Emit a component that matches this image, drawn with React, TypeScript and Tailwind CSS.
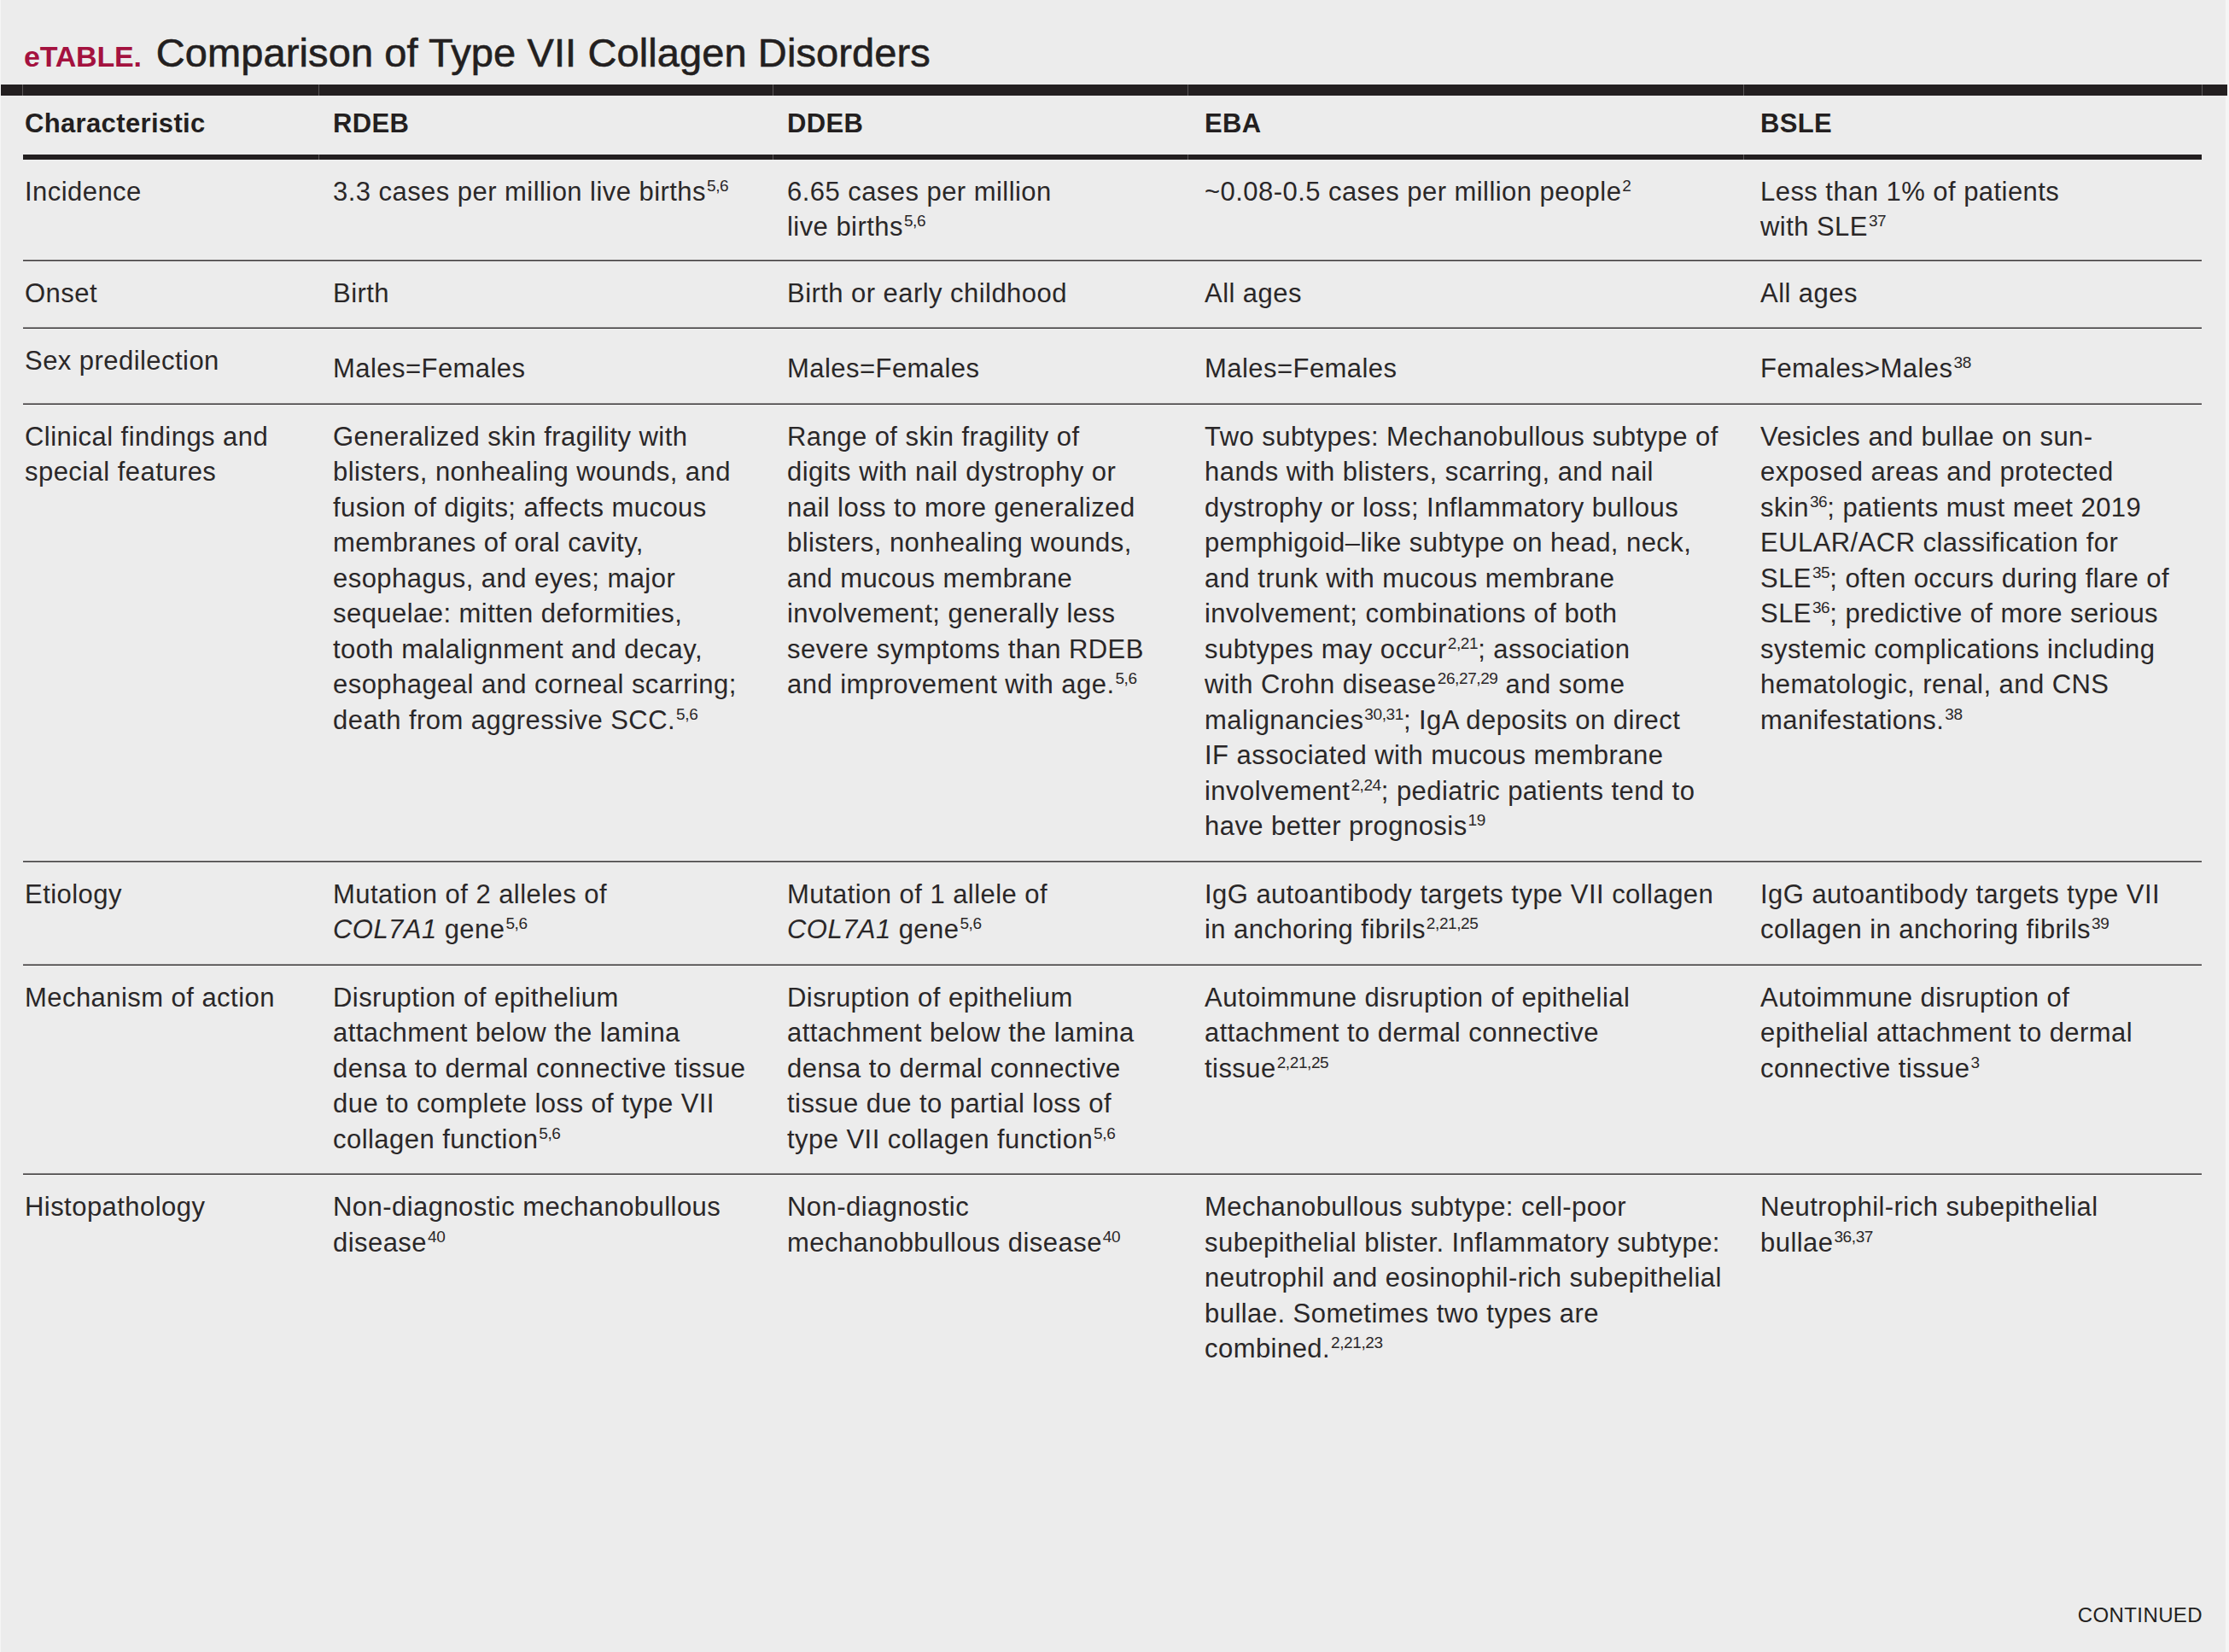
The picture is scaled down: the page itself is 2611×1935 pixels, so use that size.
import React from "react";

const Sup = ({ c }: { c: string }) => (
  <sup className="text-[19px] -top-[11px] tracking-[-0.4px] ml-[1px]">{c}</sup>
);

type Line = React.ReactNode;
type Row = {
  label: Line[];
  cells: Line[][];
  pt?: string;
  pb?: string;
  cellPt?: string;
};

const rows: Row[] = [
  {
    label: ["Incidence"],
    pb: "pb-[17px]",
    cells: [
      [<>3.3 cases per million live births<Sup c="5,6" /></>],
      ["6.65 cases per million", <>live births<Sup c="5,6" /></>],
      [<>~0.08-0.5 cases per million people<Sup c="2" /></>],
      ["Less than 1% of patients", <>with SLE<Sup c="37" /></>],
    ],
  },
  {
    label: ["Onset"],
    cells: [["Birth"], ["Birth or early childhood"], ["All ages"], ["All ages"]],
  },
  {
    label: ["Sex predilection"],
    cellPt: "pt-[26px]",
    cells: [
      ["Males=Females"],
      ["Males=Females"],
      ["Males=Females"],
      [<>Females&gt;Males<Sup c="38" /></>],
    ],
  },
  {
    label: ["Clinical findings and", "special features"],
    cells: [
      [
        "Generalized skin fragility with",
        "blisters, nonhealing wounds, and",
        "fusion of digits; affects mucous",
        "membranes of oral cavity,",
        "esophagus, and eyes; major",
        "sequelae: mitten deformities,",
        "tooth malalignment and decay,",
        "esophageal and corneal scarring;",
        <>death from aggressive SCC.<Sup c="5,6" /></>,
      ],
      [
        "Range of skin fragility of",
        "digits with nail dystrophy or",
        "nail loss to more generalized",
        "blisters, nonhealing wounds,",
        "and mucous membrane",
        "involvement; generally less",
        "severe symptoms than RDEB",
        <>and improvement with age.<Sup c="5,6" /></>,
      ],
      [
        "Two subtypes: Mechanobullous subtype of",
        "hands with blisters, scarring, and nail",
        "dystrophy or loss; Inflammatory bullous",
        "pemphigoid\u2013like subtype on head, neck,",
        "and trunk with mucous membrane",
        "involvement; combinations of both",
        <>subtypes may occur<Sup c="2,21" />; association</>,
        <>with Crohn disease<Sup c="26,27,29" /> and some</>,
        <>malignancies<Sup c="30,31" />; IgA deposits on direct</>,
        "IF associated with mucous membrane",
        <>involvement<Sup c="2,24" />; pediatric patients tend to</>,
        <>have better prognosis<Sup c="19" /></>,
      ],
      [
        "Vesicles and bullae on sun-",
        "exposed areas and protected",
        <>skin<Sup c="36" />; patients must meet 2019</>,
        "EULAR/ACR classification for",
        <>SLE<Sup c="35" />; often occurs during flare of</>,
        <>SLE<Sup c="36" />; predictive of more serious</>,
        "systemic complications including",
        "hematologic, renal, and CNS",
        <>manifestations.<Sup c="38" /></>,
      ],
    ],
  },
  {
    label: ["Etiology"],
    cells: [
      ["Mutation of 2 alleles of", <><i>COL7A1</i> gene<Sup c="5,6" /></>],
      ["Mutation of 1 allele of", <><i>COL7A1</i> gene<Sup c="5,6" /></>],
      [
        "IgG autoantibody targets type VII collagen",
        <>in anchoring fibrils<Sup c="2,21,25" /></>,
      ],
      [
        "IgG autoantibody targets type VII",
        <>collagen in anchoring fibrils<Sup c="39" /></>,
      ],
    ],
  },
  {
    label: ["Mechanism of action"],
    cells: [
      [
        "Disruption of epithelium",
        "attachment below the lamina",
        "densa to dermal connective tissue",
        "due to complete loss of type VII",
        <>collagen function<Sup c="5,6" /></>,
      ],
      [
        "Disruption of epithelium",
        "attachment below the lamina",
        "densa to dermal connective",
        "tissue due to partial loss of",
        <>type VII collagen function<Sup c="5,6" /></>,
      ],
      [
        "Autoimmune disruption of epithelial",
        "attachment to dermal connective",
        <>tissue<Sup c="2,21,25" /></>,
      ],
      [
        "Autoimmune disruption of",
        "epithelial attachment to dermal",
        <>connective tissue<Sup c="3" /></>,
      ],
    ],
  },
  {
    label: ["Histopathology"],
    cells: [
      ["Non-diagnostic mechanobullous", <>disease<Sup c="40" /></>],
      ["Non-diagnostic", <>mechanobbullous disease<Sup c="40" /></>],
      [
        "Mechanobullous subtype: cell-poor",
        "subepithelial blister. Inflammatory subtype:",
        "neutrophil and eosinophil-rich subepithelial",
        "bullae. Sometimes two types are",
        <>combined.<Sup c="2,21,23" /></>,
      ],
      ["Neutrophil-rich subepithelial", <>bullae<Sup c="36,37" /></>],
    ],
  },
];

const colPad = ["pl-[2px]", "pl-[17px]", "pl-[17px]", "pl-[20px]", "pl-[20px]"];
const gridCols = "grid grid-cols-[346px_532px_486px_651px_537px]";

function Lines({ lines }: { lines: Line[] }) {
  return (
    <>
      {lines.map((l, i) => (
        <div key={i} className="whitespace-nowrap">
          {l}
        </div>
      ))}
    </>
  );
}

function TableBar({ h }: { h: string }) {
  return (
    <div className={`flex ${h}`}>
      <div className="w-[346px] bg-[#231f20]" />
      <div className="w-px bg-[#5a5758]" />
      <div className="w-[531px] bg-[#231f20]" />
      <div className="w-px bg-[#5a5758]" />
      <div className="w-[485px] bg-[#231f20]" />
      <div className="w-px bg-[#5a5758]" />
      <div className="w-[650px] bg-[#231f20]" />
      <div className="w-px bg-[#5a5758]" />
      <div className="flex-1 bg-[#231f20]" />
    </div>
  );
}

export default function App() {
  return (
    <div className="w-[2611px] h-[1935px] bg-[#ececec] border-l border-r-[4px] border-[#f5f5f5] flex flex-col font-['Liberation_Sans',Arial,sans-serif] text-[#231f20]">
      <div className="pl-[27px] pt-[38px] pb-[9px] flex items-baseline leading-[47px]">
        <span className="text-[34px] font-bold text-[#a4123f] tracking-[-0.2px]">eTABLE.</span>
        <span className="ml-[17px] text-[47px] tracking-[0.1px] [-webkit-text-stroke:0.6px_#231f20]">
          Comparison of Type VII Collagen Disorders
        </span>
      </div>

      <div className="flex h-[13px] -mr-[2px]">
        <div className="w-[25px] bg-[#231f20]" />
        <div className="w-px bg-[#5a5758]" />
        <div className="w-[346px] bg-[#231f20]" />
        <div className="w-px bg-[#5a5758]" />
        <div className="w-[531px] bg-[#231f20]" />
        <div className="w-px bg-[#5a5758]" />
        <div className="w-[485px] bg-[#231f20]" />
        <div className="w-px bg-[#5a5758]" />
        <div className="w-[650px] bg-[#231f20]" />
        <div className="w-px bg-[#5a5758]" />
        <div className="w-[536px] bg-[#231f20]" />
        <div className="w-px bg-[#5a5758]" />
        <div className="flex-1 bg-[#231f20]" />
      </div>

      <div className="ml-[26px] mr-[28px] flex flex-col">
        <div className={`${gridCols} pt-[12px] pb-[15px] text-[31px] leading-[41.5px] font-bold tracking-[0.35px]`}>
          {["Characteristic", "RDEB", "DDEB", "EBA", "BSLE"].map((h, i) => (
            <div key={h} className={`${colPad[i]} whitespace-nowrap`}>
              {h}
            </div>
          ))}
        </div>
        <TableBar h="h-[6px]" />

        {rows.map((r, ri) => (
          <div key={ri}>
            <div className={`${gridCols} text-[31px] leading-[41.5px] tracking-[0.45px] text-[#2a2728]`}>
              <div className={`${colPad[0]} pt-[17px] ${r.pb ?? "pb-[19px]"}`}>
                <Lines lines={r.label} />
              </div>
              {r.cells.map((c, ci) => (
                <div key={ci} className={`${colPad[ci + 1]} ${r.cellPt ?? "pt-[17px]"} ${r.pb ?? "pb-[19px]"}`}>
                  <Lines lines={c} />
                </div>
              ))}
            </div>
            {ri < rows.length - 1 && (
              <div className="flex flex-col">
                <div className="h-px bg-[#8e8c8d]" />
                <div className="h-px bg-[#3a3738]" />
              </div>
            )}
          </div>
        ))}
      </div>

      <div className="flex-1" />
      <div className="flex justify-end pr-[27px] pb-[31px] text-[24px] leading-[24px] tracking-[0.4px]">
        CONTINUED
      </div>
    </div>
  );
}
